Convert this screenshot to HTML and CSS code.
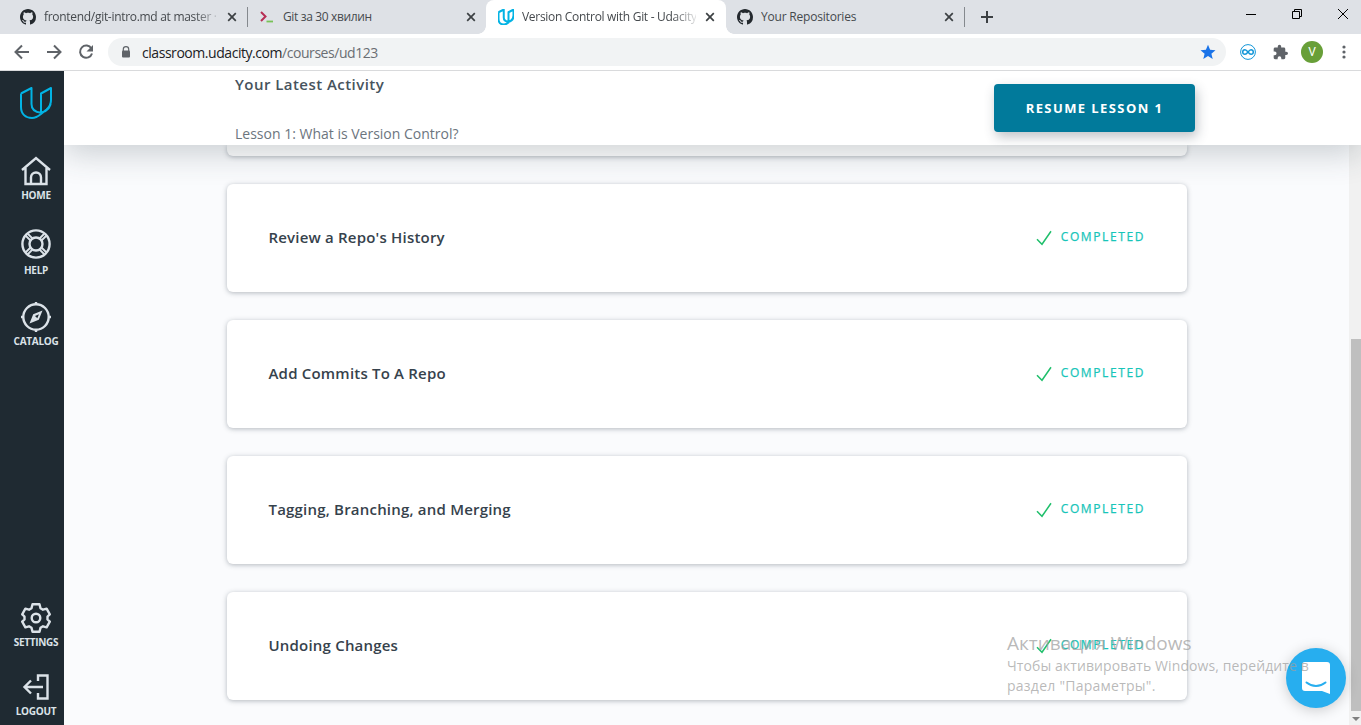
FILE: index.html
```
<!DOCTYPE html>
<html lang="en">
<head>
<meta charset="utf-8">
<title>Version Control with Git - Udacity</title>
<link rel="stylesheet" href="styles.css">
</head>
<body>
<svg class="defs" width="0" height="0" aria-hidden="true">
  <symbol id="github" viewBox="0 0 16 16"><path fill="#24292e" d="M8 0C3.58 0 0 3.58 0 8c0 3.54 2.29 6.53 5.47 7.59.4.07.55-.17.55-.38 0-.19-.01-.82-.01-1.49-2.01.37-2.53-.49-2.69-.94-.09-.23-.48-.94-.82-1.13-.28-.15-.68-.52-.01-.53.63-.01 1.08.58 1.23.82.72 1.21 1.87.87 2.33.66.07-.52.28-.87.51-1.07-1.78-.2-3.64-.89-3.64-3.95 0-.87.31-1.59.82-2.15-.08-.2-.36-1.02.08-2.12 0 0 .67-.21 2.2.82.64-.18 1.32-.27 2-.27s1.36.09 2 .27c1.53-1.04 2.2-.82 2.2-.82.44 1.1.16 1.92.08 2.12.51.56.82 1.27.82 2.15 0 3.07-1.87 3.75-3.65 3.95.29.25.54.73.54 1.48 0 1.07-.01 1.93-.01 2.2 0 .21.15.46.55.38A8.01 8.01 0 0 0 16 8c0-4.42-3.58-8-8-8z"/></symbol>
  <symbol id="close" viewBox="0 0 10 10"><path d="M1.2 1.2l7.6 7.6M8.8 1.2L1.2 8.8" stroke="#3c4043" stroke-width="1.7"/></symbol>
  <symbol id="udacity" viewBox="0 0 32 32"><path fill="none" stroke-linejoin="round" d="M1 6.5L11.5 1v16c0 5 3.5 8.200 9.500 8.700M1 6.500V20c0 7 4.500 11 11 11 3.500 0 6-1.500 9-4l5.500-4.500C30 19.500 31 17 31 13V1L21 6.500v19.200c5-1.200 10-4.700 10-12"/></symbol>
  <symbol id="check" viewBox="0 0 16 16"><path d="M1 9.300l5 5L15 1.300" fill="none" stroke="#1fbf6b" stroke-width="1.500"/></symbol>
</svg>
<div class="browser">
  <div class="tabs">
    <div class="tab tab-first"><svg class="fav"><use href="#github"/></svg><span class="tab-title title-a">frontend/git-intro.md at master ·</span><svg class="x"><use href="#close"/></svg></div>
    <i class="sep"></i>
    <div class="tab tab-second"><svg class="fav" viewBox="0 0 16 16"><path d="M3 3l4.500 4.500L3 12" fill="none" stroke="#b72e55" stroke-width="2"/><path d="M8.500 12.500H15" stroke="#78c257" stroke-width="1.800"/></svg><span class="tab-title title-b">Git за 30 хвилин</span><svg class="x"><use href="#close"/></svg></div>
    <div class="tab active"><svg class="fav uda"><use href="#udacity"/></svg><span class="tab-title title-c">Version Control with Git - Udacity</span><svg class="x"><use href="#close"/></svg></div>
    <div class="tab tab-last"><svg class="fav"><use href="#github"/></svg><span class="tab-title title-d">Your Repositories</span><svg class="x"><use href="#close"/></svg></div>
    <i class="sep"></i>
    <svg class="plus" viewBox="0 0 12 12"><path d="M6 0v12M0 6h12" stroke="#3c4043" stroke-width="2"/></svg>
    <div class="window-buttons">
      <svg viewBox="0 0 10 10"><path d="M0 5.500h10" stroke="#000"/></svg>
      <svg viewBox="0 0 10 10"><path d="M.5 2.500h7v7h-7zM2.500 2.500v-2h7v7h-2" fill="none" stroke="#000"/></svg>
      <svg viewBox="0 0 10 10"><path d="M0 0l10 10M10 0L0 10" stroke="#000"/></svg>
    </div>
  </div>
  <div class="toolbar">
    <svg class="nav" viewBox="0 0 16 16"><path d="M15 8H2M8 1.500L1.500 8 8 14.500" fill="none" stroke="#5f6368" stroke-width="2"/></svg>
    <svg class="nav" viewBox="0 0 16 16"><path d="M1 8h13M8 1.500L14.500 8 8 14.500" fill="none" stroke="#5f6368" stroke-width="2"/></svg>
    <svg class="nav" viewBox="0 0 16 16"><path d="M13.400 4.500A6.100 6.100 0 1 0 14 9.500" fill="none" stroke="#5f6368" stroke-width="2"/><path d="M15 1v6.500H8.500z" fill="#5f6368"/></svg>
    <div class="address">
      <svg class="lock" viewBox="0 0 10 12"><path d="M2.300 5V3.300a2.700 2.700 0 0 1 5.400 0V5" fill="none" stroke="#5f6368" stroke-width="1.200"/><rect x="1" y="4.500" width="8" height="7" rx="1" fill="#5f6368"/></svg>
      <span class="url">classroom.udacity.com<span>/courses/ud123</span></span>
      <svg class="star" viewBox="0 0 16 16"><path fill="#1a73e8" d="M8 .8l2.100 5 5.400.4-4.100 3.500 1.300 5.300L8 12.100 3.300 15l1.300-5.300L.5 6.200l5.400-.4z"/></svg>
    </div>
    <svg class="ext" viewBox="0 0 16 16"><g fill="none" stroke="#1296d8"><circle cx="8" cy="8" r="7.400"/><path stroke-width="1.500" d="M8 8C6.700 6.300 6 5.700 5 5.700a2.300 2.300 0 0 0 0 4.600c1 0 1.700-.6 3-2.300s2-2.300 3-2.300a2.300 2.300 0 0 1 0 4.600c-1 0-1.700-.6-3-2.300z"/></g></svg>
    <svg class="puzzle" viewBox="1 0 22 23"><path fill="#5f6368" d="M20.500 11H19V7a2 2 0 0 0-2-2h-4V3.500a2.500 2.500 0 0 0-5 0V5H4a2 2 0 0 0-2 2v3.800h1.500a2.700 2.700 0 0 1 0 5.400H2V20c0 1.100.9 2 2 2h3.800v-1.500a2.700 2.700 0 0 1 5.400 0V22H17a2 2 0 0 0 2-2v-4h1.500a2.500 2.500 0 0 0 0-5z"/></svg>
    <div class="avatar">V</div>
    <svg class="dots" viewBox="0 0 4 14"><g fill="#5f6368"><circle cx="2" cy="2" r="1.600"/><circle cx="2" cy="7" r="1.600"/><circle cx="2" cy="12" r="1.600"/></g></svg>
  </div>
</div>
<div class="app">
  <nav class="sidebar">
    <svg class="logo"><use href="#udacity"/></svg>
    <a class="item home"><svg viewBox="0 0 30 30"><path d="M1 14L15 2l14 12M4.500 12v16h21V12M10 28v-6.500a5 5 0 0 1 10 0V28"/></svg><span>HOME</span></a>
    <a class="item help"><svg viewBox="0 0 30 30"><circle cx="15" cy="15" r="13.600"/><circle cx="15" cy="15" r="6.500"/><path d="M5 7l4.500 4.500M7 5l4.500 4.500M25 7l-4.500 4.500M23 5l-4.500 4.500M5 23l4.500-4.500M7 25l4.500-4.500M25 23l-4.500-4.500M23 25l-4.500-4.500" stroke-width="1.800"/></svg><span>HELP</span></a>
    <a class="item catalog"><svg viewBox="0 0 30 30"><circle cx="15" cy="15" r="12.700"/><path d="M15 0v3M15 27v3M0 15h3M27 15h3"/><path fill="#dbe2e8" stroke="none" fill-rule="evenodd" d="M21.500 8.500l-3.700 9.200-9.300 3.800 3.700-9.300zM14 14l2.300 2.200 1.700-4z"/></svg><span>CATALOG</span></a>
    <a class="item settings"><svg viewBox="0 0 30 30"><path stroke-linejoin="round" d="M11.500 1.300h7l1 3.900 2.500 1.500 3.600-1 3.200 5.600-2.300 2.200v3l2.300 2.200-3.200 5.600-3.600-1-2.500 1.500-1 3.900h-7l-1-3.900L8 23.300l-3.600 1-3.200-5.600 2.300-2.200v-3l-2.300-2.200 3.200-5.600 3.600 1 2.500-1.500z"/><circle cx="15" cy="15" r="4.300"/></svg><span>SETTINGS</span></a>
    <a class="item logout"><svg viewBox="0 0 30 30"><path d="M17 9V3.500h9.500v23H17V21M22 15H4M10 8.500L3.500 15l6.500 6.500"/></svg><span>LOGOUT</span></a>
  </nav>
  <div class="page">
    <header class="activity">
      <div class="latest"><h2>Your Latest Activity</h2><p>Lesson 1: What is Version Control?</p></div>
      <button class="resume">RESUME LESSON 1</button>
    </header>
    <div class="body">
      <main class="lessons">
        <section class="card cut"></section>
        <section class="card"><h3>Review a Repo's History</h3><div class="done"><svg><use href="#check"/></svg><span>COMPLETED</span></div></section>
        <section class="card"><h3>Add Commits To A Repo</h3><div class="done"><svg><use href="#check"/></svg><span>COMPLETED</span></div></section>
        <section class="card"><h3>Tagging, Branching, and Merging</h3><div class="done"><svg><use href="#check"/></svg><span>COMPLETED</span></div></section>
        <section class="card"><h3>Undoing Changes</h3><div class="done"><svg><use href="#check"/></svg><span>COMPLETED</span></div></section>
      </main>
      <div class="scrollbar"><div class="thumb"></div><svg viewBox="0 0 12 14"><path fill="#7f7f7f" d="M3 6h8L7 10z"/></svg></div>
    </div>
  </div>
</div>
<div class="chat"><svg viewBox="0 0 28 32"><path fill="#fff" d="M3 0h22a3 3 0 0 1 3 3v29l-8-3H3a3 3 0 0 1-3-3V3a3 3 0 0 1 3-3z"/><path d="M4.500 20.500c5.500 4.500 13.500 4.500 19 0" fill="none" stroke="#27aeef" stroke-width="2" stroke-linecap="round"/></svg></div>
<div class="watermark"><b>Активация Windows</b><span class="line-a">Чтобы активировать Windows, перейдите в</span><span class="line-b">раздел "Параметры".</span></div>
</body>
</html>
```
FILE: styles.css
```
* { box-sizing: border-box; }
body { margin: 0; width: 1361px; height: 725px; overflow: hidden; background: #fff; font-family: "Open Sans", "Noto Sans", sans-serif; }
svg { display: block; flex: none; }
.defs { position: absolute; }
h2, h3, p { margin: 0; }

.browser { height: 71px; border-bottom: 1px solid #d9dadc; background: #fff; }
.tabs { display: flex; height: 34px; background: #dee1e6; align-items: center; }
.tab { display: flex; align-items: center; height: 34px; font-size: 12px; color: #45494d; }
.tab-first { width: 247px; padding-left: 20px; }
.tab-second { width: 238px; padding-left: 10px; }
.active { width: 240px; padding-left: 12px; background: #fff; border-radius: 8px 8px 0 0; position: relative; }
.active::before, .active::after { content: ""; position: absolute; bottom: 0; width: 8px; height: 8px; }
.active::before { left: -8px; background: radial-gradient(circle at 0 0, transparent 7.500px, #fff 8px); }
.active::after { right: -8px; background: radial-gradient(circle at 100% 0, transparent 7.500px, #fff 8px); }
.tab-last { width: 238px; padding-left: 11px; }
.fav { width: 16px; height: 16px; margin-right: 8px; }
.uda { stroke: #02b3e4; stroke-width: 4px; }
.tab-title { width: 174px; overflow: hidden; white-space: nowrap; margin: -1px 9px 0 0; }
.title-a, .title-c { -webkit-mask-image: linear-gradient(90deg, #000 150px, transparent 178px); mask-image: linear-gradient(90deg, #000 150px, transparent 178px); }
.title-a { letter-spacing: -.3px; }
.title-b { letter-spacing: -.35px; width: 182px; margin: -1px 1px 0 1px; }
.title-c { letter-spacing: -.3px; }
.title-d { letter-spacing: -.2px; }
.x { width: 10px; height: 10px; }
.sep { width: 1px; height: 20px; background: #85898e; }
.plus { width: 12px; height: 12px; margin-left: 16px; }
.window-buttons { display: flex; gap: 36px; margin-left: auto; padding: 0 13px 6px 0; }
.window-buttons svg { width: 10px; height: 10px; }
.toolbar { display: flex; align-items: center; height: 36px; padding-left: 14px; }
.nav { width: 16px; height: 16px; margin-right: 16px; }
.address { width: 1118px; height: 28px; margin-left: -2px; border-radius: 14px; background: #f1f3f4; display: flex; align-items: center; padding: 0 10px 0 13px; }
.lock { width: 10px; height: 12px; margin-right: 11px; }
.url { font-size: 14px; color: #202124; letter-spacing: -.45px; flex: 1; }
.url span { color: #6a6e73; }
.star { width: 16px; height: 16px; }
.ext { width: 16px; height: 16px; margin-left: 14px; }
.puzzle { width: 15px; height: 16px; margin-left: 17px; }
.avatar { width: 22px; height: 22px; margin-left: 13px; border-radius: 50%; background: #689f38; color: #fff; font: 12px/22px Roboto, sans-serif; text-align: center; }
.dots { width: 4px; height: 14px; margin-left: 19px; }

.app { display: flex; height: 654px; }
.sidebar { width: 64px; height: 654px; background: #1f2a32; display: flex; flex-direction: column; align-items: center; padding: 16px 0 8px 8px; flex: none; }
.logo { width: 32px; height: 32px; stroke: #02b3e4; stroke-width: 2px; }
.item { display: flex; flex-direction: column; align-items: center; color: #dbe2e8; font-size: 10px; font-weight: 700; line-height: 12px; letter-spacing: -.28px; }
.item svg { width: 30px; height: 30px; fill: none; stroke: #dbe2e8; stroke-width: 2.400px; }
.item span { margin-top: 3px; }
.home { margin-top: 37px; }
.help { margin-top: 28px; }
.help span { margin-top: 5px; }
.catalog { margin-top: 26px; }
.settings { margin-top: auto; }
.logout { margin-top: 24px; }
.page { flex: 1; min-width: 0; }
.activity { position: relative; z-index: 2; height: 74px; background: #fff; display: flex; padding: 0 166px 0 171px; justify-content: space-between; box-shadow: 0 8px 32px rgba(46, 61, 73, .24); clip-path: inset(0 0 -60px 0); }
.latest h2 { font-size: 15px; font-weight: 600; line-height: 22px; padding-top: 2px; letter-spacing: .45px; color: #47535d; }
.latest p { font-size: 14px; line-height: 20px; margin-top: 29px; color: #6c757e; }
.resume { width: 201px; height: 48px; margin-top: 13px; border: 0; border-radius: 4px; background: #017a9b; color: #fff; font: 700 13px "Open Sans", sans-serif; letter-spacing: 1.420px; padding: 0; box-shadow: 2px 5px 12px rgba(46, 61, 73, .3); }
.body { height: 580px; display: flex; background: #fafbfd; }
.lessons { width: 1285px; padding-left: 163px; display: flex; flex-direction: column; gap: 28px; overflow: hidden; }
.card { width: 960px; height: 108px; flex: none; border-radius: 6px; background: #fff; box-shadow: 0 1px 5px rgba(46, 61, 73, .35); display: flex; align-items: center; justify-content: space-between; padding: 0 43.500px 2px 41.500px; }
.cut { height: 11px; border-radius: 0 0 6px 6px; }
.card h3 { font-size: 15px; font-weight: 600; letter-spacing: .2px; color: #36424c; }
.done { display: flex; align-items: center; gap: 9px; color: #18c5b9; font-size: 12px; font-weight: 400; letter-spacing: 1.600px; -webkit-text-stroke: .25px #18c5b9; }
.done svg { width: 16px; height: 16px; margin-top: 1px; }
.done span { margin: -2px -1.500px 0 0; }
.scrollbar { width: 12px; background: #f1f1f1; padding: 194px 0 0 2px; }
.thumb { height: 372px; background: #bfbfbf; }
.scrollbar svg { width: 12px; height: 14px; margin-left: -2px; }
.chat { position: absolute; left: 1286px; top: 648px; width: 60px; height: 60px; border-radius: 50%; background: #27aeef; display: flex; align-items: center; justify-content: center; box-shadow: 0 2px 14px rgba(0, 0, 0, .2); }
.chat svg { width: 28px; height: 32px; }
.watermark { position: absolute; left: 1007px; top: 631px; display: flex; flex-direction: column; color: rgba(158, 158, 158, .72); white-space: nowrap; font-size: 14px; line-height: 20px; letter-spacing: .1px; }
.line-b { letter-spacing: .25px; }
.watermark b { font-size: 19px; line-height: 25px; font-weight: 400; letter-spacing: 0; }
```
